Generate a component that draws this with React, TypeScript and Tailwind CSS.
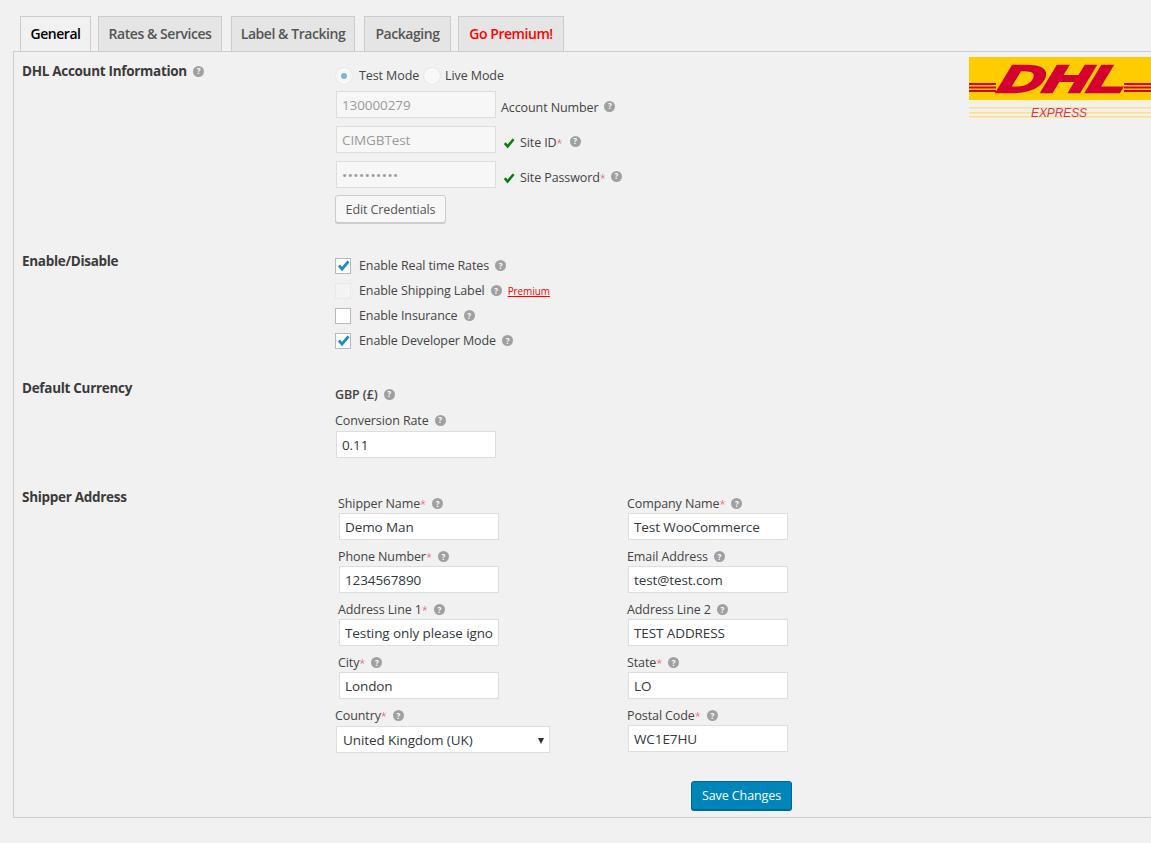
import React from "react";

const Help = ({ className = "" }: { className?: string }) => (
  <span className={`inline-flex h-[11px] w-[11px] shrink-0 items-center justify-center rounded-full bg-[#a0a0a0] text-[8px] font-bold leading-none text-white ${className}`}>?</span>
);

const Star = () => <span className="text-[11px] font-light text-[#ee3344]">*</span>;

const Check = ({ className = "" }: { className?: string }) => (
  <svg viewBox="0 0 12 11" className={className}>
    <path d="M0.8 6 L2.8 4.2 L4.6 6.4 L9.6 0.4 L11.6 2 L4.7 10.4 Z" fill="currentColor" />
  </svg>
);

const Tab = ({ label, className, active, red }: { label: string; className: string; active?: boolean; red?: boolean }) => (
  <div
    className={`-mb-px flex h-[36px] items-center justify-center border border-[#cccccc] pb-[2px] text-[14px] font-semibold tracking-[-0.45px] ${className} ${
      active ? "border-b-[#f1f1f1] bg-[#f1f1f1] text-black" : red ? "bg-[#e5e5e5] text-[#ff0000]" : "bg-[#e5e5e5] text-[#555555]"
    }`}
  >
    {label}
  </div>
);

const Heading = ({ children, className = "" }: { children: React.ReactNode; className?: string }) => (
  <div className={`w-[321px] shrink-0 pl-[8px] text-[13.5px] font-bold tracking-[-0.3px] text-[#3a3a3a] ${className}`}>{children}</div>
);

const Box = ({ value, muted, type = "text" }: { value: string; muted?: boolean; type?: string }) => (
  <input
    readOnly
    type={type}
    value={value}
    className={`block h-[27px] w-[160px] shrink-0 border border-[#dddddd] px-[5px] text-[13.5px] outline-none ${
      muted ? "bg-[#f7f7f7] text-[#9a9a9a]" : "bg-white text-[#32373c]"
    } ${type === "password" ? "tracking-[0.6px]" : ""}`}
  />
);

const Cb = ({ label, checked, disabled, extra }: { label: string; checked?: boolean; disabled?: boolean; extra?: React.ReactNode }) => (
  <div className="flex h-[25px] items-center">
    <div className={`flex h-[16px] w-[16px] items-center justify-center border ${disabled ? "border-[#e9e9e9] bg-[#f3f3f3]" : "border-[#b4b9be] bg-white"}`}>
      {checked && <Check className="h-[12px] w-[13px] text-[#1e8cbe]" />}
    </div>
    <span className="ml-[7px] mt-[2px] pl-px">{label}</span>
    <Help className="ml-[6px]" />
    {extra}
  </div>
);

const Field = ({ label, star, value }: { label: string; star?: boolean; value: string }) => (
  <div className="h-[53px]">
    <div className="flex h-[25px] items-start pt-[7px]">
      <span>{label}{star && <Star />}</span>
      <Help className="ml-[6px] mt-[3px]" />
    </div>
    <div className="pl-px">
      <Box value={value} />
    </div>
  </div>
);

const DhlLogo = () => (
  <svg viewBox="0 0 182 62" className="block h-[62px] w-[182px]">
    <rect width="182" height="43" fill="#ffcc00" />
    <rect y="43" width="182" height="3" fill="#f7f0d8" />
    {[26, 29.5, 33].map((y) => (
      <g key={y} fill="#d40030">
        <rect x="0" y={y} width="27" height="2" />
        <rect x="155" y={y} width="27" height="2" />
      </g>
    ))}
    <g transform="translate(91 35) skewX(-16)">
      <text x="0" y="0" textAnchor="middle" fontFamily="Liberation Sans" fontWeight="900" fontStyle="italic" fontSize="38" fill="#d40030" stroke="#d40030" strokeWidth="2.4" textLength="127" lengthAdjust="spacingAndGlyphs">DHL</text>
    </g>
    {[50, 55, 59].map((y) => (
      <rect key={y} x="0" y={y} width="182" height="1.5" fill="#fbe27f" />
    ))}
    <text x="90" y="60" textAnchor="middle" fontFamily="Liberation Sans" fontStyle="italic" fontSize="12" fill="#dc3355" textLength="56" lengthAdjust="spacingAndGlyphs">EXPRESS</text>
  </svg>
);

export default function App() {
  return (
    <div className="h-[843px] w-[1151px] overflow-hidden bg-[#f1f1f1] pl-[13px] pt-[16px] font-['Open_Sans',sans-serif] text-[12.5px] tracking-[-0.1px] text-[#444444]">
      <div className="flex pl-[7px]">
        <Tab label="General" active className="w-[71px]" />
        <Tab label="Rates & Services" className="ml-[7px] w-[124px]" />
        <Tab label="Label & Tracking" className="ml-[9px] w-[124px]" />
        <Tab label="Packaging" className="ml-[9px] w-[87px]" />
        <Tab label="Go Premium!" red className="ml-[7px] w-[106px]" />
      </div>
      <div className="relative h-[767px] border border-r-0 border-[#cccccc]">
        <div className="absolute right-0 top-[5px]">
          <DhlLogo />
        </div>

        <div className="flex pt-[10px]">
          <Heading className="-mt-px">
            <span className="inline-flex items-center">DHL Account Information<Help className="ml-[6px]" /></span>
          </Heading>
          <div>
            <div className="ml-px mt-[2px] flex h-[24px] items-center">
              <div className="flex h-[16px] w-[16px] items-center justify-center rounded-full bg-[#f8f8f8] shadow-[0_0_0_1px_#e8e8e8]">
                <div className="h-[6px] w-[6px] rounded-full bg-[#7eb6d6]" />
              </div>
              <span className="ml-[7px]">Test Mode</span>
              <div className="ml-[5px] h-[16px] w-[16px] rounded-full bg-[#f8f8f8] shadow-[0_0_0_1px_#e8e8e8]" />
              <span className="ml-[5px]">Live Mode</span>
            </div>
            <div className="ml-px mt-[3px] flex h-[27px] items-center">
              <Box value="130000279" muted />
              <span className="ml-[5px] mt-[7px]">Account Number</span>
              <Help className="ml-[6px] mt-[3px]" />
            </div>
            <div className="ml-px mt-[8px] flex h-[27px] items-center">
              <Box value="CIMGBTest" muted />
              <Check className="ml-[7px] mt-[8px] h-[11px] w-[12px] text-[#0a7d0a]" />
              <span className="ml-[5px] mt-[7px]">Site ID<Star /></span>
              <Help className="ml-[7px] mt-[3px]" />
            </div>
            <div className="ml-px mt-[8px] flex h-[27px] items-center">
              <Box value="••••••••••" muted type="password" />
              <Check className="ml-[7px] mt-[8px] h-[11px] w-[12px] text-[#0a7d0a]" />
              <span className="ml-[5px] mt-[7px]">Site Password<Star /></span>
              <Help className="ml-[5px] mt-[3px]" />
            </div>
            <div className="mt-[7px] flex h-[28px] w-[111px] items-center justify-center rounded-[3px] border border-[#cccccc] bg-[#f7f7f7] pt-[2px] text-[#555555] shadow-[0_1px_0_#cccccc]">
              Edit Credentials
            </div>
          </div>
        </div>

        <div className="mt-[30px] flex">
          <Heading className="-mt-[2px]">Enable/Disable</Heading>
          <div>
            <Cb label="Enable Real time Rates" checked />
            <Cb
              label="Enable Shipping Label"
              disabled
              extra={<span className="ml-[6px] mt-[2px] text-[10px] text-[#ff0000] underline">Premium</span>}
            />
            <Cb label="Enable Insurance" />
            <Cb label="Enable Developer Mode" checked />
          </div>
        </div>

        <div className="mt-[25px] flex">
          <Heading>Default Currency</Heading>
          <div>
            <div className="mt-[8px] flex h-[18px] items-center font-semibold text-[#444444]">GBP (£)<Help className="mb-[2px] ml-[6px]" /></div>
            <div className="mt-[8px] flex h-[18px] items-center">Conversion Rate<Help className="mb-[2px] ml-[6px]" /></div>
            <div className="ml-px mt-[1px]"><Box value="0.11" /></div>
          </div>
        </div>

        <div className="mt-[29px] flex">
          <Heading>Shipper Address</Heading>
          <div className="mt-[1px] flex">
            <div className="w-[292px]">
              <div className="pl-[3px]">
                <Field label="Shipper Name" star value="Demo Man" />
                <Field label="Phone Number" star value="1234567890" />
                <Field label="Address Line 1" star value="Testing only please ignore" />
                <Field label="City" star value="London" />
              </div>
              <div className="flex h-[26px] items-end">
                <span>Country<Star /></span>
                <Help className="mb-[5px] ml-[6px]" />
              </div>
              <div className="ml-px flex h-[27px] w-[214px] items-center justify-between border border-[#dddddd] bg-white pl-[6px] pr-[5px] pt-[2px] text-[13.5px] text-[#32373c]">
                United Kingdom (UK)
                <span className="h-0 w-0 border-x-[3.5px] border-t-[6px] border-x-transparent border-t-[#333333]" />
              </div>
            </div>
            <div>
              <Field label="Company Name" star value="Test WooCommerce" />
              <Field label="Email Address" value="test@test.com" />
              <Field label="Address Line 2" value="TEST ADDRESS" />
              <Field label="State" star value="LO" />
              <Field label="Postal Code" star value="WC1E7HU" />
            </div>
          </div>
        </div>

        <div className="ml-[677px] mt-[28px] flex h-[29px] w-[101px] items-center justify-center rounded-[3px] border border-[#006799] bg-[#0085ba] pt-[2px] text-white shadow-[0_1px_0_#006799]">
          Save Changes
        </div>
      </div>
    </div>
  );
}
